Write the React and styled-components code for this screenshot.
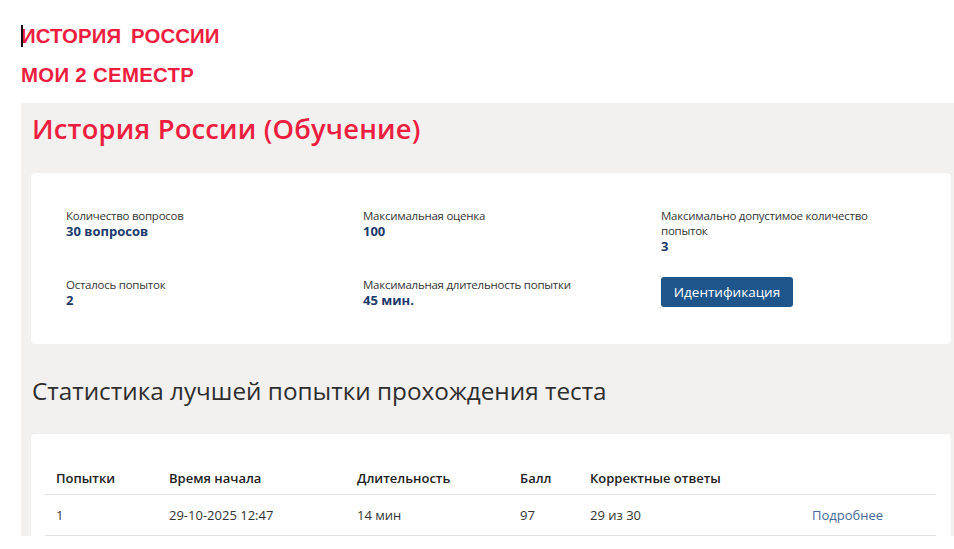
import React from "react";
import styled, { createGlobalStyle } from "styled-components";

const Global = createGlobalStyle`
  html, body { margin: 0; padding: 0; background: #ffffff; }
  body { font-family: "Open Sans", "Noto Sans", sans-serif; }
`;

const Page = styled.div`
  width: 954px;
  height: 549px;
  overflow: hidden;
  padding-left: 21px;
  box-sizing: border-box;
`;

const TopHeader = styled.div`
  padding-top: 24px;
  display: flex;
  flex-direction: column;
  gap: 15px;
  margin-bottom: 16px;
`;

const TopLine = styled.div`
  position: relative;
  font-family: "Liberation Sans", Arial, sans-serif;
  font-weight: bold;
  font-size: 20.4px;
  line-height: 24px;
  letter-spacing: ${(p) => (p.$wide ? "0.1px" : "0.3px")};
  word-spacing: ${(p) => (p.$wide ? "4px" : "0")};
  color: #ec1d3f;
  white-space: pre;
`;

const Caret = styled.span`
  position: absolute;
  left: 0;
  top: 1px;
  width: 1.5px;
  height: 22px;
  background: #111;
`;

const Panel = styled.div`
  background: #f2f1ef;
  padding: 8px 3px 0 10px;
`;

const Title = styled.h1`
  margin: 0 0 0 1px;
  font-family: "Open Sans", sans-serif;
  font-weight: 600;
  font-size: 27.3px;
  line-height: 36px;
  color: #ec1d3f;
  letter-spacing: 0.2px;
`;

const Card = styled.div`
  background: #ffffff;
  border-radius: 4px;
  box-shadow: 0 0 1px rgba(0, 0, 0, 0.06);
`;

const InfoCard = styled(Card)`
  margin-top: 26px;
  padding: 35px 20px 35px 35px;
  display: grid;
  grid-template-columns: 297px 298px 1fr;
  row-gap: 22px;
`;

const Field = styled.div`
  display: flex;
  flex-direction: column;
`;

const Label = styled.div`
  font-size: 11.5px;
  line-height: 15px;
  letter-spacing: -0.25px;
  color: #363636;
  max-width: 230px;
`;

const Value = styled.div`
  font-size: 13px;
  line-height: 17px;
  font-weight: 700;
  color: #1c3a6b;
`;

const Button = styled.button`
  align-self: flex-start;
  width: 132px;
  height: 30px;
  border: none;
  border-radius: 3px;
  background: #1e568c;
  color: #ffffff;
  font-family: "Open Sans", sans-serif;
  font-size: 13.5px;
  font-weight: 500;
  cursor: pointer;
`;

const SectionHeading = styled.h2`
  margin: 32px 0 28px 1px;
  font-family: "Open Sans", sans-serif;
  font-weight: 400;
  font-size: 24.3px;
  line-height: 30px;
  color: #2e2e2e;
`;

const TableCard = styled(Card)`
  padding: 27px 15px 0 14px;
  border-radius: 4px 4px 0 0;
`;

const Table = styled.table`
  width: 100%;
  table-layout: fixed;
  border-collapse: collapse;
  font-size: 13px;
  color: #333;
`;

const Th = styled.th`
  text-align: left;
  font-weight: 600;
  color: #222;
  padding: 0 0 0 11px;
  height: 33px;
  white-space: nowrap;
  width: ${(p) => p.$w || "auto"};
  border-bottom: 1px solid #e4e4e4;
`;

const Td = styled.td`
  padding: 0 0 0 11px;
  height: 40px;
  white-space: nowrap;
  border-bottom: 1px solid #e4e4e4;
`;

const Link = styled.a`
  color: #46699a;
  text-decoration: none;
`;

const fields = [
  { label: "Количество вопросов", value: "30 вопросов" },
  { label: "Максимальная оценка", value: "100" },
  { label: "Максимально допустимое количество попыток", value: "3" },
  { label: "Осталось попыток", value: "2" },
  { label: "Максимальная длительность попытки", value: "45 мин." },
];

export default function App() {
  return (
    <>
      <Global />
      <Page>
        <TopHeader>
          <TopLine $wide>
            <Caret />
            {"ИСТОРИЯ РОССИИ"}
          </TopLine>
          <TopLine>{"МОИ 2 СЕМЕСТР"}</TopLine>
        </TopHeader>
        <Panel>
          <Title>История России (Обучение)</Title>
          <InfoCard>
            {fields.map((f) => (
              <Field key={f.label}>
                <Label>{f.label}</Label>
                <Value>{f.value}</Value>
              </Field>
            ))}
            <Field>
              <Button>Идентификация</Button>
            </Field>
          </InfoCard>
          <SectionHeading>Статистика лучшей попытки прохождения теста</SectionHeading>
          <TableCard>
            <Table>
              <thead>
                <tr>
                  <Th $w="102px">Попытки</Th>
                  <Th $w="177px">Время начала</Th>
                  <Th $w="152px">Длительность</Th>
                  <Th $w="59px">Балл</Th>
                  <Th $w="211px">Корректные ответы</Th>
                  <Th />
                </tr>
              </thead>
              <tbody>
                <tr>
                  <Td>1</Td>
                  <Td>29-10-2025 12:47</Td>
                  <Td>14 мин</Td>
                  <Td>97</Td>
                  <Td>29 из 30</Td>
                  <Td>
                    <Link href="#">Подробнее</Link>
                  </Td>
                </tr>
              </tbody>
            </Table>
          </TableCard>
        </Panel>
      </Page>
    </>
  );
}
